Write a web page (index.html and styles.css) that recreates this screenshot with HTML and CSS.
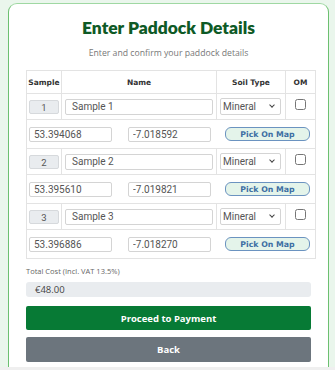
FILE: index.html
```html
<!DOCTYPE html>
<html lang="en">
<head>
    <meta charset="UTF-8">
    <meta name="viewport" content="width=device-width, initial-scale=1.0">
    <title>Enter Paddock Details</title>
    <link rel="stylesheet" href="styles.css">
</head>
<body>
    <div class="paddock-card">
        <h1 class="paddock-title">Enter Paddock Details</h1>
        <p class="paddock-subtitle">Enter and confirm your paddock details</p>

        <table class="sample-table">
            <thead>
                <tr>
                    <th class="col-sample">Sample</th>
                    <th class="col-name">Name</th>
                    <th class="col-soil">Soil Type</th>
                    <th class="col-om">OM</th>
                </tr>
            </thead>
            <tbody>
                <tr class="sample-row">
                    <td><div class="sample-no">1</div></td>
                    <td><input class="field name-field" type="text" value="Sample 1"></td>
                    <td>
                        <div class="select-wrap">
                            <select class="field soil-select">
                                <option>Mineral</option>
                                <option>Peat</option>
                            </select>
                        </div>
                    </td>
                    <td class="om-cell"><input type="checkbox" class="om-check"></td>
                </tr>
                <tr class="coord-row">
                    <td colspan="4">
                        <div class="coord-grid">
                            <input class="field coord-field" type="text" value="53.394068">
                            <input class="field coord-field" type="text" value="-7.018592">
                            <button class="map-btn">Pick On Map</button>
                        </div>
                    </td>
                </tr>
                <tr class="sample-row">
                    <td><div class="sample-no">2</div></td>
                    <td><input class="field name-field" type="text" value="Sample 2"></td>
                    <td>
                        <div class="select-wrap">
                            <select class="field soil-select">
                                <option>Mineral</option>
                                <option>Peat</option>
                            </select>
                        </div>
                    </td>
                    <td class="om-cell"><input type="checkbox" class="om-check"></td>
                </tr>
                <tr class="coord-row">
                    <td colspan="4">
                        <div class="coord-grid">
                            <input class="field coord-field" type="text" value="53.395610">
                            <input class="field coord-field" type="text" value="-7.019821">
                            <button class="map-btn">Pick On Map</button>
                        </div>
                    </td>
                </tr>
                <tr class="sample-row">
                    <td><div class="sample-no">3</div></td>
                    <td><input class="field name-field" type="text" value="Sample 3"></td>
                    <td>
                        <div class="select-wrap">
                            <select class="field soil-select">
                                <option>Mineral</option>
                                <option>Peat</option>
                            </select>
                        </div>
                    </td>
                    <td class="om-cell"><input type="checkbox" class="om-check"></td>
                </tr>
                <tr class="coord-row">
                    <td colspan="4">
                        <div class="coord-grid">
                            <input class="field coord-field" type="text" value="53.396886">
                            <input class="field coord-field" type="text" value="-7.018270">
                            <button class="map-btn">Pick On Map</button>
                        </div>
                    </td>
                </tr>
            </tbody>
        </table>

        <label class="cost-label">Total Cost (Incl. VAT 13.5%)</label>
        <div class="cost-value">€48.00</div>

        <button class="action-btn pay-btn">Proceed to Payment</button>
        <button class="action-btn back-btn">Back</button>
    </div>
</body>
</html>
```

FILE: styles.css
```css
/* Page */
html, body {
    height: 100%;
}

body {
    margin: 0;
    padding: 3px 6px 0 8px;
    background: #eaf6ec;
    font-family: "Open Sans", "Liberation Sans", sans-serif;
    color: #333;
    overflow: hidden;
}

/* page edge strip at the bottom of the window */
body::after {
    content: '';
    position: fixed;
    left: 0;
    right: 0;
    bottom: 0;
    height: 3px;
    background: #efefef;
}

.paddock-card {
    background: #fff;
    border: 1.5px solid #6cc070;
    border-top-color: #9fd8a2;
    border-radius: 9px;
    padding: 0 17px 20px;
    min-height: 420px;
}

.paddock-title {
    margin: 0;
    padding-top: 12px;
    text-align: center;
    font-family: "Lato", "Open Sans", sans-serif;
    font-size: 17.4px;
    font-weight: 800;
    line-height: 24px;
    color: #0e5a26;
}

.paddock-subtitle {
    margin: 7px 0 0;
    text-align: center;
    font-size: 8.7px;
    line-height: 13px;
    color: #777;
}

/* Samples table */
.sample-table {
    width: 285px;
    margin-top: 10px;
    border-collapse: collapse;
    table-layout: fixed;
    border: 1px solid #e3e3e3;
}

.col-sample { width: 34px; }
.col-name { width: 154px; }
.col-soil { width: 68px; }
.col-om { width: 29px; }

.sample-table th {
    height: 22px;
    padding: 0;
    font-family: "DejaVu Sans", sans-serif;
    font-size: 7.5px;
    font-weight: bold;
    color: #333;
    text-align: center;
    border: 1px solid #e3e3e3;
}

.sample-row td {
    height: 25px;
    padding: 0 3px;
    border-left: 1px solid #e3e3e3;
    border-right: 1px solid #e3e3e3;
    border-top: 1px solid #e3e3e3;
    vertical-align: middle;
}

.coord-row td {
    height: 28px;
    padding: 0 3px 0 2px;
    border-top: 1px solid #e3e3e3;
}

.sample-no {
    height: 14px;
    line-height: 14px;
    margin: 0 -1px;
    background: #e9ecef;
    border: 1px solid #d6d9dc;
    border-radius: 2px;
    text-align: center;
    font-family: "Roboto", sans-serif;
    font-size: 9.5px;
    color: #555;
    box-sizing: border-box;
}

.field {
    box-sizing: border-box;
    display: block;
    width: 100%;
    margin: 0;
    border: 1px solid #d4d4d4;
    border-radius: 2px;
    background: #fff;
    font-family: "Roboto", sans-serif;
    font-size: 10px;
    color: #555;
}

.name-field {
    height: 16px;
    padding: 0 6px;
}

.select-wrap {
    position: relative;
    margin-right: 1px;
}

.select-wrap::after {
    content: '';
    position: absolute;
    right: 7px;
    top: 5px;
    width: 3px;
    height: 3px;
    border-right: 1.2px solid #444;
    border-bottom: 1.2px solid #444;
    transform: rotate(45deg);
    pointer-events: none;
}

.soil-select {
    -webkit-appearance: none;
    appearance: none;
    height: 17px;
    padding: 0 0 0 2px;
    font-size: 10px;
    color: #555;
}

.om-cell {
    text-align: center;
}

.om-check {
    width: 11px;
    height: 11px;
    margin: 0;
    position: relative;
    top: -3px;
}

.coord-grid {
    display: grid;
    grid-template-columns: 83px 83px 83px;
    column-gap: 16px;
    align-items: center;
}

.coord-field {
    height: 15px;
    padding: 0 4px;
}

.map-btn {
    height: 14px;
    padding: 0;
    margin-left: -2px;
    border: 1px solid #6b93c0;
    border-radius: 6px;
    background: #e4f4ea;
    font-family: "DejaVu Sans", sans-serif;
    font-size: 7.8px;
    font-weight: bold;
    color: #3d6ea3;
    cursor: pointer;
}

/* Cost + actions */
.cost-label {
    display: block;
    margin-top: 7px;
    font-size: 7.5px;
    line-height: 11px;
    color: #666;
}

.cost-value {
    margin-top: 5px;
    height: 15px;
    line-height: 15px;
    padding: 0 9px;
    background: #e9ecef;
    border-radius: 3px;
    font-size: 9.5px;
    color: #444;
}

.action-btn {
    display: block;
    width: 100%;
    height: 24px;
    border: none;
    border-radius: 2px;
    font-family: "Open Sans", sans-serif;
    font-size: 9.5px;
    font-weight: bold;
    color: #fff;
    cursor: pointer;
}

.pay-btn {
    margin-top: 9px;
    background: #077a35;
}

.back-btn {
    margin-top: 7px;
    height: 25px;
    background: #6c757d;
}
```
